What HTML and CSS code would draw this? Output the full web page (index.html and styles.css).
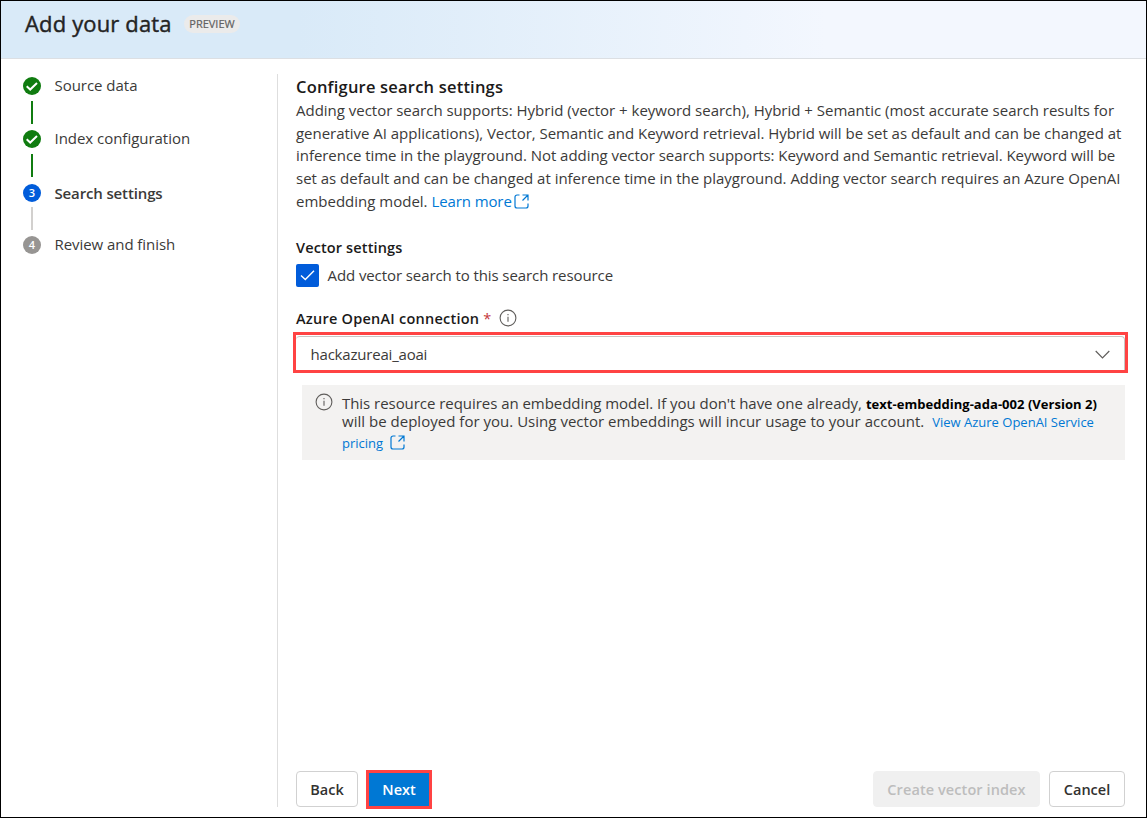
FILE: index.html
```html
<!DOCTYPE html>
<html lang="en">
<head>
<meta charset="utf-8">
<title>Add your data</title>
<link rel="stylesheet" href="styles.css">
</head>
<body>
<div class="dialog">
  <header class="header">
    <h1 class="title">Add your data</h1>
    <span class="preview">PREVIEW</span>
  </header>
  <div class="body">
    <nav class="steps">
      <div class="step">
        <svg class="dot" viewBox="0 0 18 18"><circle cx="9" cy="9" r="9" fill="#107c10"/><path d="M3.700 9.200l3.500 3.300L14 6" fill="none" stroke="#fff" stroke-width="2"/></svg>
        <span class="label l-source">Source data</span>
      </div>
      <div class="bar done"></div>
      <div class="step">
        <svg class="dot" viewBox="0 0 18 18"><circle cx="9" cy="9" r="9" fill="#107c10"/><path d="M3.700 9.200l3.500 3.300L14 6" fill="none" stroke="#fff" stroke-width="2"/></svg>
        <span class="label l-index">Index configuration</span>
      </div>
      <div class="bar done after-index"></div>
      <div class="step">
        <span class="dot num current">3</span>
        <span class="label l-search">Search settings</span>
      </div>
      <div class="bar after-search"></div>
      <div class="step">
        <span class="dot num">4</span>
        <span class="label l-review">Review and finish</span>
      </div>
    </nav>
    <main class="main">
      <h2 class="heading">Configure search settings</h2>
      <p class="intro">
        <span class="line a1">Adding vector search supports: Hybrid (vector + keyword search), Hybrid + Semantic (most accurate search results for</span>
        <span class="line a2">generative AI applications), Vector, Semantic and Keyword retrieval. Hybrid will be set as default and can be changed at</span>
        <span class="line a3">inference time in the playground. Not adding vector search supports: Keyword and Semantic retrieval. Keyword will be</span>
        <span class="line a4">set as default and can be changed at inference time in the playground. Adding vector search requires an Azure OpenAI</span>
        <span class="line a5">embedding model. <a class="link">Learn more<svg class="open" viewBox="0 0 15 15"><path d="M5.500 1H3a2 2 0 0 0-2 2v9a2 2 0 0 0 2 2h9a2 2 0 0 0 2-2V9.500M8.500 1H14v5.500M14 1L8.500 6.500"/></svg></a></span>
      </p>
      <h3 class="subheading">Vector settings</h3>
      <label class="check">
        <svg class="box" viewBox="0 0 23 23"><rect width="23" height="23" rx="2" fill="#015cda"/><path d="M5 11.500l4.300 4 8.700-8.700" fill="none" stroke="#fff" stroke-width="1.400"/></svg>
        <span class="check-text">Add vector search to this search resource</span>
      </label>
      <div class="field-label">
        <span class="field-name">Azure OpenAI connection</span><span class="star">*</span>
        <svg class="info" viewBox="0 0 18 18"><circle cx="9" cy="9" r="7.900"/><path d="M9 7.700v5M9 5v1.300"/></svg>
      </div>
      <div class="marked">
        <div class="select">
          <span class="value">hackazureai_aoai</span>
          <svg class="chevron" viewBox="0 0 15 9"><path d="M.7 1l6.800 6.800L14.300 1"/></svg>
        </div>
      </div>
      <div class="notice">
        <svg class="info" viewBox="0 0 18 18"><circle cx="9" cy="9" r="7.900"/><path d="M9 7.700v5M9 5v1.300"/></svg>
        <div class="notice-text">
          <div class="row"><span class="n1">This resource requires an embedding model. If you don't have one already,</span><b class="model">text-embedding-ada-002 (Version 2)</b></div>
          <div class="row"><span class="n2">will be deployed for you. Using vector embeddings will incur usage to your account.</span><a class="link small n3">View Azure OpenAI Service</a></div>
          <div class="row last"><a class="link small n4">pricing</a><svg class="open" viewBox="0 0 15 15"><path d="M5.500 1H3a2 2 0 0 0-2 2v9a2 2 0 0 0 2 2h9a2 2 0 0 0 2-2V9.500M8.500 1H14v5.500M14 1L8.500 6.500"/></svg></div>
        </div>
      </div>
      <footer class="footer">
        <button class="btn back">Back</button>
        <div class="marked-btn"><button class="btn next">Next</button></div>
        <button class="btn create" disabled>Create vector index</button>
        <button class="btn cancel">Cancel</button>
      </footer>
    </main>
  </div>
</div>
</body>
</html>
```
FILE: styles.css
```css
* { box-sizing: border-box; }
body { margin: 0; font-family: "Open Sans", sans-serif; font-size: 15px; color: #3b3a39; background: #fff; }
h1, h2, h3, p { margin: 0; }
.dialog { width: 1147px; height: 818px; border: 1px solid #000; display: flex; flex-direction: column; overflow: hidden; }
.header { height: 58px; flex: none; display: flex; align-items: flex-start; padding: 7px 0 0 24px; border-bottom: 1px solid #dcdfe3; background: linear-gradient(90deg, #d9eaf8 0%, #d9eaf8 26%, #f3f7fe 72%, #f3f7fe 100%); }
.title { font-size: 22px; line-height: 30px; font-weight: 400; letter-spacing: .15px; -webkit-text-stroke: .4px #242424; white-space: nowrap; color: #242424; width: 159px; }
.preview { height: 18px; margin-top: 7px; width: 56px; border-radius: 9px; background: #ebebeb; color: #616161; font-size: 11px; line-height: 18px; text-align: center; -webkit-text-stroke: .2px #616161; }
.body { flex: 1; display: flex; }
.steps { width: 276px; flex: none; padding: 18px 0 0 22px; }
.step { display: flex; align-items: center; height: 18px; gap: 13.500px; }
.dot { width: 18px; height: 18px; flex: none; }
.num { border-radius: 9px; background: #979593; color: #fff; font-size: 11px; line-height: 18px; text-align: center; font-weight: 600; }
.current { background: #015cda; }
.label { white-space: nowrap; line-height: 20px; padding-bottom: 2px; letter-spacing: -.03px; }
.l-search { font-weight: 600; letter-spacing: -.14px; padding: 0; }
.l-review { letter-spacing: -.06px; }
.bar { width: 2px; height: 23px; margin: 6px 0 6px 8px; background: #d2d0ce; }
.done { background: #107c10; }
.after-index { margin-bottom: 7px; }
.after-search { margin-top: 5px; }
.main { margin: 15px 0 10px; flex: 1; border-left: 1px solid #dedede; padding: 0 21px 0 18px; display: flex; flex-direction: column; }
.heading { font-size: 16.500px; letter-spacing: .2px; line-height: 24px; font-weight: 600; color: #1b1a19; white-space: nowrap; padding-top: 1px; }
.intro { line-height: 22.700px; }
.line { display: block; white-space: nowrap; }
.a1 { letter-spacing: -.01px; }
.a2 { letter-spacing: -.027px; }
.a3 { letter-spacing: -.047px; }
.a4 { letter-spacing: -.017px; }
.link { color: #0078d4; }
.open { width: 15px; height: 15px; fill: none; stroke: #0078d4; stroke-width: 1.200; vertical-align: -2px; margin-left: 2px; }
.a5 .link { letter-spacing: -.1px; }
.subheading { margin-top: 25px; line-height: 20px; font-size: 14.500px; letter-spacing: .13px; font-weight: 600; color: #1b1a19; }
.check { display: flex; align-items: center; gap: 8.500px; margin-top: 6px; height: 23px; letter-spacing: -.09px; }
.box { width: 23px; height: 23px; }
.field-label { display: flex; align-items: center; height: 22px; margin-top: 21px; font-size: 14.500px; letter-spacing: .24px; font-weight: 600; color: #1b1a19; white-space: nowrap; }
.star { color: #c4373a; margin-left: 4px; font-weight: 400; }
.info { width: 18px; height: 18px; flex: none; fill: none; stroke: #605e5c; stroke-width: 1.100; }
.field-label .info { margin-left: 7px; margin-top: -2px; }
.marked { height: 41px; margin: 2px -3px 0 -3px; border: 3px solid #ff4343; flex: none; }
.select { height: 34px; margin-top: 1px; border-top: 1px solid #c8c6c4; border-right: 1px solid #c8c6c4; border-radius: 4px 4px 0 0; display: flex; align-items: center; justify-content: space-between; padding: 2px 14px 0 14.500px; }
.value { letter-spacing: -.2px; }
.chevron { width: 15px; height: 9px; fill: none; stroke: #605e5c; stroke-width: 1.200; }
.notice { margin: 12px 0 0 6px; height: 75px; flex: none; background: #f3f2f1; display: flex; padding: 9px 0 0 13px; gap: 9px; }
.notice .info { margin-top: -1px; }
.row { display: flex; align-items: center; white-space: nowrap; height: 18px; line-height: 18px; }
.last { height: 24px; }
.n1 { letter-spacing: -.045px; }
.n2 { letter-spacing: .02px; }
.model { font-size: 13px; margin: 2px 0 0 4px; color: #000; letter-spacing: .03px; }
.small { font-size: 13px; }
.n3 { margin: 2px 0 0 8px; }
.n4 { margin-top: 2px; }
.row .open { margin: 1px 0 0 7px; }
.footer { margin: auto 0 -2px; display: flex; height: 39px; align-items: flex-start; }
.btn { font-family: inherit; font-size: 14.500px; font-weight: 600; height: 36px; margin-top: 1px; padding: 0; border: 1px solid #d1d1d1; border-radius: 4px; background: #fff; color: #323130; white-space: nowrap; }
.back { width: 62px; }
.marked-btn { margin-left: 8px; width: 66px; height: 39px; border: 3px solid #ff4343; background: #0078d4; display: flex; }
.next { width: 60px; height: 33px; margin: 0; border: 0; border-radius: 0; background: #0078d4; color: #fff; }
.create { width: 167px; margin-left: auto; border-color: #f0f0f0; background: #f0f0f0; color: #bdbdbd; letter-spacing: .09px; }
.cancel { width: 76px; margin-left: 9px; }
```
